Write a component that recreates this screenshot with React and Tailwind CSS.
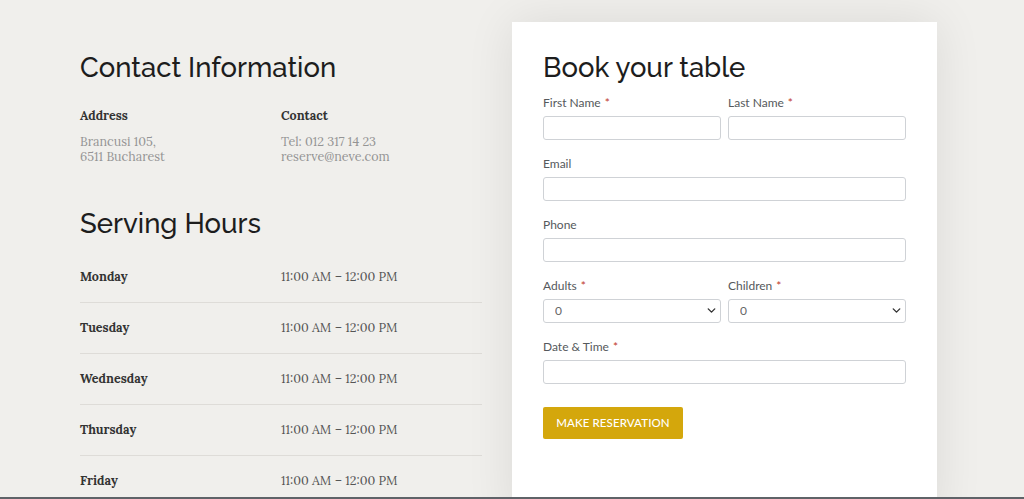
import React from 'react';
import { ChevronDown } from 'lucide-react';

const hours = [
  { day: 'Monday', time: '11:00 AM – 12:00 PM' },
  { day: 'Tuesday', time: '11:00 AM – 12:00 PM' },
  { day: 'Wednesday', time: '11:00 AM – 12:00 PM' },
  { day: 'Thursday', time: '11:00 AM – 12:00 PM' },
  { day: 'Friday', time: '11:00 AM – 12:00 PM' },
];

const serif = "font-['Lora','Liberation_Serif',serif]";
const heading = "font-['Raleway','Lato',sans-serif]";

const Label = ({ children, required }) => (
  <label className="block h-4 leading-4 text-[12px] text-[#55595c] mb-[5px]">
    {children}
    {required && <span className="text-[#c0392b] ml-1">*</span>}
  </label>
);

const Input = () => (
  <input className="block w-full h-6 rounded-[3px] border border-[#cfd2d6] bg-white outline-none" />
);

const Select = () => (
  <div className="relative h-6">
    <select className="appearance-none block w-full h-6 rounded-[3px] border border-[#cfd2d6] bg-white pl-[11px] text-[12px] text-[#666] outline-none">
      <option>0</option>
    </select>
    {/* chevron */}
    <ChevronDown size={13} strokeWidth={2.6} className="absolute right-[3px] top-[5px] text-[#333] pointer-events-none" />
  </div>
);

export default function App() {
  return (
    <div className="h-[499px] overflow-hidden flex flex-col bg-[#f0efec] font-['Lato','Open_Sans',sans-serif]">
      <div className="flex-1 flex gap-[30px] pl-[80px] pt-[22px] overflow-hidden">
        {/* Left column */}
        <div className="w-[402px] pt-[28px]">
          <h2 className={`${heading} text-[27.5px] leading-[34px] font-medium text-[#1d1d1d]`}>Contact Information</h2>
          <div className={`${serif} grid grid-cols-2 mt-[23px]`}>
            <div>
              <h4 className="text-[12.5px] leading-4 font-bold text-[#333]">Address</h4>
              <p className="mt-[10.5px] text-[12.5px] leading-[15px] text-[#949494]">Brancusi 105,<br />6511 Bucharest</p>
            </div>
            <div>
              <h4 className="text-[12.5px] leading-4 font-bold text-[#333]">Contact</h4>
              <p className="mt-[10.5px] text-[12.5px] leading-[15px] text-[#949494]">Tel: 012 317 14 23<br />reserve@neve.com</p>
            </div>
          </div>
          <h2 className={`${heading} mt-[42.5px] text-[27.5px] leading-[34px] font-medium text-[#1d1d1d]`}>Serving Hours</h2>
          <div className={`${serif} mt-[11.5px]`}>
            {hours.map((h) => (
              <div key={h.day} className="grid grid-cols-2 h-[51px] items-center border-b border-[#dedcd8] text-[12.5px]">
                <span className="font-bold text-[#333]">{h.day}</span>
                <span className="text-[#555]">{h.time}</span>
              </div>
            ))}
          </div>
        </div>

        {/* Booking card */}
        <div className="w-[425px] shrink-0 self-start h-[500px] bg-white px-[31px] pt-[28px] shadow-[0_0_45px_rgba(0,0,0,0.09)]">
          <h2 className={`${heading} text-[27.5px] leading-[34px] font-medium text-[#1d1d1d]`}>Book your table</h2>
          <form className="mt-[11px] flex flex-col gap-4">
            <div className="grid grid-cols-2 gap-[7px]">
              <div><Label required>First Name</Label><Input /></div>
              <div><Label required>Last Name</Label><Input /></div>
            </div>
            <div><Label>Email</Label><Input /></div>
            <div><Label>Phone</Label><Input /></div>
            <div className="grid grid-cols-2 gap-[7px]">
              <div><Label required>Adults</Label><Select /></div>
              <div><Label required>Children</Label><Select /></div>
            </div>
            <div><Label required>Date &amp; Time</Label><Input /></div>
            <div className="pt-[7px]">
              <button type="button" className="w-[140px] h-8 rounded-[2px] bg-[#d4a70c] text-white text-[11.5px] font-medium tracking-[0.1px]">
                MAKE RESERVATION
              </button>
            </div>
          </form>
        </div>
      </div>
      <div className="h-[2px] bg-[#5f6368]" />
    </div>
  );
}
